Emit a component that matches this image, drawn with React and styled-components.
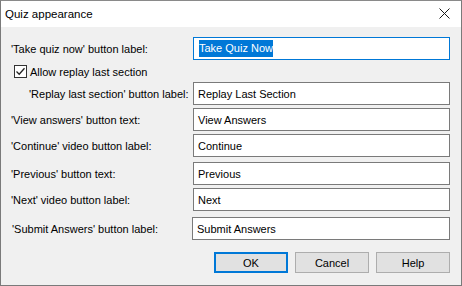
import styled, { createGlobalStyle } from "styled-components";

const GlobalStyle = createGlobalStyle`
  html, body {
    margin: 0;
    padding: 0;
    background: #ffffff;
  }
  * {
    box-sizing: border-box;
  }
`;

const Window = styled.div`
  width: 462px;
  height: 286px;
  border: 1px solid #7a7a7a;
  border-top-color: #8a8a8a;
  background: #f0f0f0;
  font-family: "Liberation Sans", Arial, sans-serif;
  font-size: 11px;
  color: #000;
  display: flex;
  flex-direction: column;
`;

const TitleBar = styled.div`
  height: 26px;
  background: #ffffff;
  display: flex;
  align-items: center;
  justify-content: space-between;
  padding: 0 11px 1px 4px;
`;

const Title = styled.span`
  font-size: 11.5px;
`;

const CloseIcon = styled.svg`
  width: 11px;
  height: 11px;
  display: block;
`;

const Body = styled.div`
  flex: 1;
  padding: 10px 11px 0 10px;
  display: flex;
  flex-direction: column;
`;

const Row = styled.div`
  display: flex;
  align-items: center;
  margin-top: ${(p) => p.$gap}px;
  padding-left: ${(p) => p.$indent || 0}px;
`;

const Label = styled.span`
  flex: 1;
  white-space: nowrap;
`;

const TextBox = styled.div`
  width: ${(p) => p.$width || 257}px;
  height: 23px;
  background: #ffffff;
  border: 1px solid ${(p) => (p.$focused ? "#0078d7" : "#7a7a7a")};
  display: flex;
  align-items: center;
  padding-left: ${(p) => (p.$focused ? 5 : 4)}px;
  white-space: nowrap;
`;

const Selected = styled.span`
  background: #0078d7;
  color: #ffffff;
  padding: 2px 0 3px;
`;

const CheckRow = styled.label`
  display: flex;
  align-items: center;
  gap: 3px;
  margin-top: 5px;
  padding-left: 3px;
  height: 13px;
`;

const Box = styled.span`
  width: 13px;
  height: 13px;
  border: 1px solid #333333;
  background: #ffffff;
  display: flex;
  align-items: center;
  justify-content: center;
`;

const Buttons = styled.div`
  display: flex;
  justify-content: flex-end;
  gap: 7px;
  margin-top: 12px;
`;

const Button = styled.div`
  width: 74px;
  height: 21px;
  background: #e1e1e1;
  border: ${(p) => (p.$primary ? "2px solid #0078d7" : "1px solid #adadad")};
  display: flex;
  align-items: center;
  justify-content: center;
`;

const fields = [
  { label: "'View answers' button text:", value: "View Answers", gap: 3 },
  { label: "'Continue' video button label:", value: "Continue", gap: 3 },
  { label: "'Previous' button text:", value: "Previous", gap: 5 },
  { label: "'Next' video button label:", value: "Next", gap: 3 },
];

export default function App() {
  return (
    <>
      <GlobalStyle />
      <Window>
        <TitleBar>
          <Title>Quiz appearance</Title>
          <CloseIcon viewBox="0 0 11 11">
            <path d="M0.5 0.5 L10.5 10.5 M10.5 0.5 L0.5 10.5" stroke="#1a1a1a" strokeWidth="1" />
          </CloseIcon>
        </TitleBar>
        <Body>
          <Row $gap={0}>
            <Label>'Take quiz now' button label:</Label>
            <TextBox $focused>
              <Selected>Take Quiz Now</Selected>
            </TextBox>
          </Row>
          <CheckRow>
            <Box>
              <svg width="11" height="11" viewBox="0 0 11 11">
                <path d="M1.5 5.5 L4.2 8.2 L9.5 2.2" fill="none" stroke="#222" strokeWidth="1.3" />
              </svg>
            </Box>
            <span>Allow replay last section</span>
          </CheckRow>
          <Row $gap={4} $indent={18}>
            <Label>'Replay last section' button label:</Label>
            <TextBox>Replay Last Section</TextBox>
          </Row>
          {fields.map((f) => (
            <Row key={f.value} $gap={f.gap}>
              <Label>{f.label}</Label>
              <TextBox>{f.value}</TextBox>
            </Row>
          ))}
          <Row $gap={6} $indent={1}>
            <Label>'Submit Answers' button label:</Label>
            <TextBox $width={258}>Submit Answers</TextBox>
          </Row>
          <Buttons>
            <Button $primary>OK</Button>
            <Button>Cancel</Button>
            <Button>Help</Button>
          </Buttons>
        </Body>
      </Window>
    </>
  );
}
